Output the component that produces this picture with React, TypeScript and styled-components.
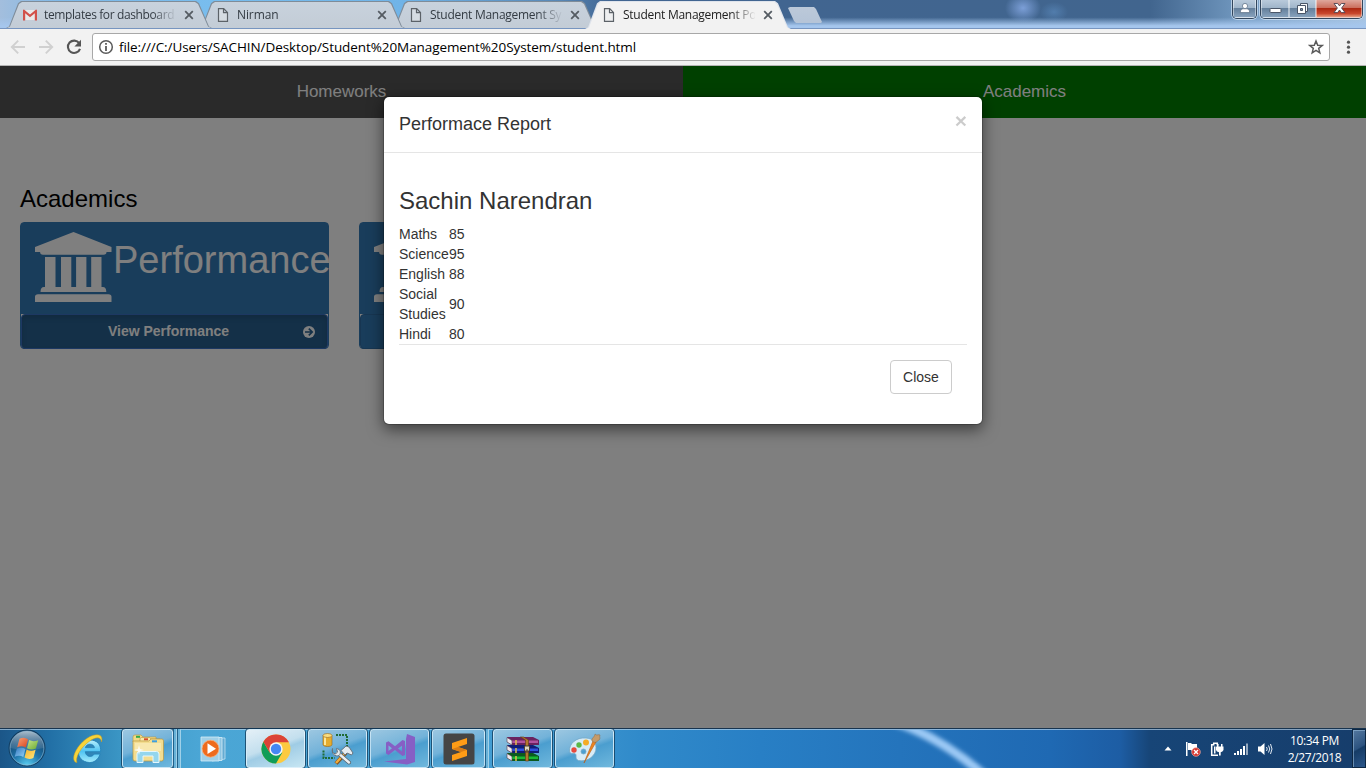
import React from "react";
import styled, { createGlobalStyle, css } from "styled-components";

const GlobalStyle = createGlobalStyle`
  *, *::before, *::after { box-sizing: border-box; }
  body {
    margin: 0;
    width: 1366px;
    height: 768px;
    overflow: hidden;
    font-family: "Liberation Sans", Arial, sans-serif;
    font-size: 14px;
    line-height: 1.42857;
    color: #333;
  }
  svg { display: block; flex: none; }
`;

const Desktop = styled.div`
  display: flex;
  flex-direction: column;
  width: 1366px;
  height: 768px;
  overflow: hidden;
`;

/* ---------- browser frame ---------- */

const TitleBar = styled.header`
  display: flex;
  justify-content: space-between;
  height: 29px;
  padding-left: 6px;
  border-bottom: 1px solid #7795c0;
  background:
    radial-gradient(ellipse 18px 15px at 1023px 8px, rgba(134, 169, 228, 0.85) 0, rgba(134, 169, 228, 0) 100%),
    radial-gradient(ellipse 14px 10px at 1054px 12px, rgba(98, 148, 201, 0.5) 0, rgba(98, 148, 201, 0) 100%),
    linear-gradient(180deg, rgba(165, 198, 237, 0) 62%, #a5c6ed 92%),
    linear-gradient(90deg, #a3bedd 0, #7fb9e8 60px, #78bdee 215px, #70b4e8 400px, #5787b6 560px, #416591 610px, #41658e 1150px, #7198bf 1240px, #a8c4df 1366px);
`;

const TabStrip = styled.div`
  display: flex;
  padding-top: 1px;
`;

const Tab = styled.div<{ $active?: boolean; $order: number }>`
  position: relative;
  z-index: ${(p) => p.$order};
  display: flex;
  align-items: center;
  width: 206px;
  height: ${(p) => (p.$active ? 28 : 27)}px;
  margin-right: -13px;
  padding: ${(p) => (p.$active ? "0 16px 0 17px" : "1px 16px 0 17px")};
  font: 12px/16px "Open Sans", sans-serif;
  color: ${(p) => (p.$active ? "#222" : "#333b43")};
  clip-path: polygon(0 100%, 3px 94%, 12px 8%, 15px 0, 190px 0, 193px 8%, 203px 94%, 206px 100%);
  background: ${(p) => (p.$active ? "#dfe4ec" : "#7f8c99")};

  &::before {
    content: "";
    position: absolute;
    z-index: -1;
    inset: 1px 1px 0 1px;
    clip-path: polygon(0 100%, 3px 94%, 12px 8%, 15px 0, 188px 0, 191px 8%, 201px 94%, 204px 100%);
    background: ${(p) => (p.$active ? "#f2f2f2" : "linear-gradient(#c8d2dd, #c3ccd6)")};
  }
`;

const TabTitle = styled.span<{ $tight: number }>`
  width: 132px;
  margin-left: 7px;
  white-space: nowrap;
  letter-spacing: ${(p) => p.$tight}px;
  mask-image: linear-gradient(90deg, #000 108px, transparent 133px);
`;

const NewTab = styled.div`
  width: 34px;
  height: 16px;
  margin: 6px 0 0 10px;
  clip-path: polygon(2px 0, 26px 0, 28px 2px, 34px 15px, 33px 16px, 8px 16px, 6px 14px, 0 1px);
  background: linear-gradient(#bcc9d9, #b5c4d7);
  filter: drop-shadow(0 0 1px #6d86a5);
`;

const WindowControls = styled.div`
  display: flex;
  height: 19px;
  margin-right: 3px;
`;

const ControlGroup = styled.div`
  display: flex;
  margin-left: 3px;
  border: 1px solid #33465c;
  border-top: 0;
  border-radius: 0 0 5px 5px;
  overflow: hidden;
  box-shadow: 0 0 0 1px rgba(220, 235, 250, 0.65);
`;

const Control = styled.div<{ $width: number; $danger?: boolean }>`
  display: flex;
  align-items: center;
  justify-content: center;
  width: ${(p) => p.$width}px;
  height: 18px;
  padding-bottom: 1px;
  border: 1px solid rgba(255, 255, 255, 0.45);
  border-top: 0;
  background: ${(p) =>
    p.$danger
      ? "linear-gradient(#dfa79c 0, #cb6f5e 45%, #ad2812 50%, #c9472d 80%, #e59b7e 100%)"
      : "linear-gradient(#b9cadb 0, #a0b5ca 45%, #65809c 50%, #86a1bc 100%)"};
`;

const Toolbar = styled.div`
  display: flex;
  align-items: center;
  height: 37px;
  padding: 0 10px 0 10px;
  border-bottom: 1px solid #b4b4b4;
  background: #f2f2f2;
`;

const NavButtons = styled.div`
  display: flex;
  gap: 12px;
  width: 82px;
`;

const Omnibox = styled.div`
  display: flex;
  align-items: center;
  width: 1238px;
  height: 28px;
  padding: 0 5px 0 5px;
  border: 1px solid #a8a8a8;
  border-radius: 3px;
  background: #fff;
`;

const Url = styled.span`
  flex: 1;
  margin-left: 5px;
  font: 13.5px/20px "Open Sans", sans-serif;
  letter-spacing: -0.08px;
  color: #000;
`;

const Menu = styled.div`
  margin-left: 10px;
`;

/* ---------- web page ---------- */

const Viewport = styled.main`
  position: relative;
  height: 662px;
  overflow: hidden;
  background: #fff;
`;

const NavTabs = styled.nav`
  display: grid;
  grid-template-columns: 1fr 1fr;
`;

const NavTab = styled.button<{ $selected?: boolean }>`
  height: 52px;
  border: 0;
  font: 17px/24px "Liberation Sans", Arial, sans-serif;
  color: #fff;
  background: ${(p) => (p.$selected ? "#008000" : "#555")};
`;

const Section = styled.section`
  padding: 68px 20px 0;
`;

const Heading = styled.h3`
  margin: 0 0 10px;
  font-size: 24px;
  font-weight: 400;
  line-height: 26px;
  color: #000;
`;

const Cards = styled.div`
  display: flex;
  gap: 30px;
`;

const Card = styled.article`
  width: 309px;
  height: 127px;
  border: 1px solid #337ab7;
  border-radius: 4px;
  background: linear-gradient(#337ab7 91px, #fff 91px);
  color: #fff;
`;

const CardBody = styled.div`
  display: flex;
  height: 91px;
  padding: 9px 0 0 14px;
  font-size: 38px;
  line-height: 56px;
  white-space: nowrap;
  gap: 1px;
`;

const CardButton = styled.div<{ $focused?: boolean }>`
  display: flex;
  align-items: center;
  height: 35px;
  padding: 0 12px;
  border: 1px solid #2e6da4;
  border-radius: 4px;
  font-weight: 700;
  background: #337ab7;
  ${(p) =>
    p.$focused &&
    css`
      border-color: #3a70c4;
      background: #286090;
      box-shadow: inset 0 3px 5px rgba(0, 0, 0, 0.125);
    `}
  span { flex: 1; text-align: center; }
`;

/* covers the whole page behind the dialog */
const Backdrop = styled.div`
  position: absolute;
  inset: 0;
  padding-top: 30px;
  background: rgba(0, 0, 0, 0.5);
`;

const Dialog = styled.div`
  width: 600px;
  margin: 0 auto;
  border: 1px solid rgba(0, 0, 0, 0.2);
  border-radius: 6px;
  background: #fff;
  background-clip: padding-box;
  box-shadow: 0 5px 15px rgba(0, 0, 0, 0.5);
`;

const DialogHeader = styled.div`
  display: flex;
  justify-content: space-between;
  height: 56px;
  padding: 14px 15px;
  border-bottom: 1px solid #e5e5e5;
`;

const DialogTitle = styled.h4`
  margin: 0;
  font-size: 18px;
  font-weight: 400;
  line-height: 26px;
`;

const Dismiss = styled.button`
  align-self: flex-start;
  margin-top: -1px;
  padding: 0;
  border: 0;
  font: bold 21px/21px "Liberation Sans", Arial, sans-serif;
  color: #000;
  background: none;
  opacity: 0.2;
`;

const DialogBody = styled.div`
  padding: 35px 15px 15px;
`;

const StudentName = styled.h3`
  margin: 0 0 10px;
  font-size: 24px;
  font-weight: 400;
  line-height: 26px;
`;

const Marks = styled.table`
  width: 66px;
  border-collapse: collapse;
  table-layout: fixed;
  line-height: 20px;
  td { padding: 0; vertical-align: middle; }
  td:first-child { width: 50px; }
`;

const DialogFooter = styled.div`
  display: flex;
  justify-content: flex-end;
  padding: 15px;
  border-top: 1px solid #e5e5e5;
`;

const CloseButton = styled.button`
  width: 62px;
  height: 34px;
  padding: 0;
  border: 1px solid #ccc;
  border-radius: 4px;
  font: 14px/20px "Liberation Sans", Arial, sans-serif;
  color: #333;
  background: #fff;
`;

/* ---------- taskbar ---------- */

const Taskbar = styled.footer`
  position: relative;
  display: flex;
  height: 40px;
  border-top: 1px solid #18344f;
  background: linear-gradient(90deg, #1b5688 0, #2270a6 50px, #3e9bc9 130px, #4ba6d5 200px, #48a4d6 400px, #3f98d0 560px, #308aca 640px, #287fc5 760px, #2474bc 900px, #1f69b3 1050px, #1d5da4 1120px, #174577 1150px, #163d6b 1366px);
  box-shadow: inset 0 1px 0 rgba(190, 215, 235, 0.65);
`;

/* wallpaper streak that shows through the glass */
const Streak = styled.svg`
  position: absolute;
  left: 680px;
  top: 1px;
`;

const Launcher = styled.div<{ $width: number }>`
  display: flex;
  align-items: center;
  justify-content: center;
  width: ${(p) => p.$width}px;
  height: 39px;
`;

const TaskButton = styled.div<{ $width: number; $gap?: number; $active?: boolean }>`
  display: flex;
  align-items: center;
  justify-content: center;
  width: ${(p) => p.$width}px;
  height: 39px;
  margin-right: ${(p) => p.$gap ?? 2}px;
  border: 1px solid rgba(225, 243, 252, 0.75);
  border-radius: 3px;
  outline: 1px solid rgba(15, 55, 85, 0.75);
  outline-offset: 0;
  background: ${(p) =>
    p.$active
      ? "linear-gradient(160deg, #e4f0f7 0, #c3dfee 45%, #9fcce5 55%, #c7e6f3 100%)"
      : "linear-gradient(160deg, #9cc7e1 0, #72b2d9 45%, #4b9ecf 55%, #70b8dd 100%)"};
`;

const StackEdge = styled.div<{ $gap?: number }>`
  width: 4px;
  height: 39px;
  margin-right: ${(p) => p.$gap ?? 0}px;
  border-right: 1px solid #9fd0e8;
  border-left: 1px solid #21618a;
  background: #68b2d8;
`;

const Tray = styled.div`
  display: flex;
  align-items: center;
  gap: 8px;
  margin-left: auto;
`;

const Overflow = styled.div`
  margin-right: 5px;
`;

const Clock = styled.div`
  width: 67px;
  margin: 0 -4px 0 0;
  text-align: center;
  font: 12px/17px "Open Sans", sans-serif;
  letter-spacing: -0.35px;
  color: #fff;
`;

const ShowDesktop = styled.div`
  width: 14px;
  height: 39px;
  border: 1px solid #0d2743;
  box-shadow: inset 1px 1px 0 rgba(150, 185, 215, 0.6);
  background: linear-gradient(150deg, #54789f 0, #2c5380 48%, #163c66 52%, #2b568a 100%);
`;

/* ---------- icons ---------- */

const GmailIcon = () => (
  <svg width="14" height="14" viewBox="0 0 14 14">
    <path d="M1 2h12v10H1z" fill="#e9e9e9" />
    <path d="M0 2.2Q0 1.6 1 1.6l6 5 6-5q1 0 1 .8V12.4h-2.2V5.2L7 9.2 2.2 5.2v7.2H0z" fill="#d2514a" />
  </svg>
);

const PageIcon = () => (
  <svg width="14" height="14" viewBox="0 0 14 14">
    <path d="M2.5.7h5.2l3.8 3.8v8.8h-9zM7.5.7v4h4" fill="#e8ebee" fillOpacity=".45" stroke="#5c6268" strokeWidth="1.2" />
  </svg>
);

const TabCloseIcon = () => (
  <svg width="10" height="10" viewBox="0 0 10 10" stroke="#555c63" strokeWidth="1.8">
    <path d="m1.2 1.2 7.6 7.6M8.8 1.2 1.2 8.8" />
  </svg>
);

const ArrowIcon = ({ flip }: { flip?: boolean }) => (
  <svg width="16" height="16" viewBox="0 0 16 16" fill="none" stroke="#d0d0d0" strokeWidth="1.9" transform={flip ? "scale(-1,1)" : undefined}>
    <path d="M15 8H2.5M8.2 1.6 1.8 8l6.4 6.4" />
  </svg>
);

const ReloadIcon = () => (
  <svg width="16" height="16" viewBox="0 0 16 16">
    <path d="M13.2 4.2A6.2 6.2 0 1 0 14 9.8" fill="none" stroke="#555" strokeWidth="2.1" />
    <path d="M15 .8v6.6H8.4z" fill="#555" />
  </svg>
);

const InfoIcon = () => (
  <svg width="16" height="16" viewBox="0 0 16 16">
    <circle cx="8" cy="8" r="6.3" fill="none" stroke="#5a5a5a" strokeWidth="1.5" />
    <path d="M7.1 4.1h1.8v1.7H7.1zM7.1 6.9h1.8v5H7.1z" fill="#5a5a5a" />
  </svg>
);

const StarIcon = () => (
  <svg width="16" height="16" viewBox="0 0 16 16">
    <path d="m8 2 1.7 4.2 4.5.3-3.5 2.9 1.1 4.400L8 11.400l-3.800 2.400 1.100-4.400-3.500-2.900 4.500-.3z" fill="none" stroke="#5a5a5a" strokeWidth="1.500" />
  </svg>
);

const DotsIcon = () => (
  <svg width="16" height="16" viewBox="0 0 16 16" fill="#555">
    <circle cx="8.500" cy="3.200" r="1.600" /><circle cx="8.500" cy="8.200" r="1.600" /><circle cx="8.500" cy="13.200" r="1.600" />
  </svg>
);

const UserGlyph = () => (
  <svg width="12" height="12" viewBox="0 0 12 12" fill="#fff" stroke="#55697f" strokeWidth=".7">
    <path d="M1.300 10.600c0-3 1.600-3.600 3-3.800h3.400c1.400.2 3 .8 3 3.800z" /><circle cx="6" cy="4" r="2.600" />
  </svg>
);

const MinimizeGlyph = () => (
  <svg width="13" height="12" viewBox="0 0 13 12">
    <rect x="1" y="6.500" width="11" height="4" rx=".8" fill="#fff" stroke="#4a5668" />
  </svg>
);

const RestoreGlyph = () => (
  <svg width="13" height="13" viewBox="0 0 13 13" stroke="#4a5668">
    <path d="M4.500 1.500h7v8h-7z" fill="#f5f6f8" /><path d="M1.500 3.500h8v8h-8z" fill="#fff" /><path d="M4.500 6.500h2v2h-2z" fill="#7e96af" />
  </svg>
);

const CloseGlyph = () => (
  <svg width="13" height="12" viewBox="0 0 13 12">
    <path d="M1 1.500h3.600l1.900 2.400 1.900-2.400H12L8.600 6l3.400 4.600H8.400L6.500 8l-1.900 2.600H1L4.400 6z" fill="#fff" stroke="#4d4450" strokeWidth=".9" />
  </svg>
);

const BankIcon = () => (
  <svg width="77" height="70" viewBox="0 0 77 70" fill="#fff">
    <path d="M38.500 0 76.500 15v5h-5q0 2.700-3 2.700H8Q5.100 22.700 5.100 20H0v-5zM10 25h10.500v30H26V25h10.300v30h4.800V25h10.300v30h4.800V25h10.300v30h1.300q3.500 0 3.500 5H5.500q0-5 3.500-5h1zM3 62.300h70.500q3 0 3 2.500V70H0v-5.200q0-2.500 3-2.500z" />
  </svg>
);

const CircleArrow = () => (
  <svg width="12" height="12" viewBox="0 0 12 12">
    <circle cx="6" cy="6" r="6" fill="#fff" />
    <path d="M2 6h7M5.800 2.600 9.200 6l-3.400 3.400" fill="none" stroke="#286090" strokeWidth="1.700" />
  </svg>
);

const StartOrb = () => (
  <svg width="40" height="39" viewBox="0 0 40 39">
    <defs>
      <radialGradient id="orb" cx=".5" cy="1" r=".9">
        <stop offset="0" stopColor="#5cd2f4" /><stop offset=".45" stopColor="#1f74aa" /><stop offset="1" stopColor="#123c62" />
      </radialGradient>
      <linearGradient id="gloss" x2="0" y2="1">
        <stop stopColor="#d2e0e9" stopOpacity=".8" /><stop offset="1" stopColor="#5f87a6" stopOpacity=".3" />
      </linearGradient>
      <linearGradient id="red" x2="1" y2="1"><stop stopColor="#f7a275" /><stop offset="1" stopColor="#dc4420" /></linearGradient>
      <linearGradient id="green" x2="1" y2="1"><stop stopColor="#c6e38a" /><stop offset="1" stopColor="#6aab33" /></linearGradient>
      <linearGradient id="blue" x2="1" y2="1"><stop stopColor="#3478c0" /><stop offset="1" stopColor="#93d2f6" /></linearGradient>
      <linearGradient id="yellow" x2="1" y2="1"><stop stopColor="#f6b22b" /><stop offset="1" stopColor="#fde87f" /></linearGradient>
    </defs>
    <circle cx="20" cy="19" r="18" fill="url(#orb)" stroke="#143e60" />
    <path d="M3 19a17 17 0 0 1 34 0Q20 23 3 19z" fill="url(#gloss)" />
    <circle cx="20" cy="19" r="16.900" fill="none" stroke="#8db9d3" strokeOpacity=".6" />
    <path d="M12.500 9.800q4.500-2.400 8.500.4l-2.200 8.300q-4-2.400-8.600-.2z" fill="url(#red)" />
    <path d="M22.200 11q4 2.200 9 .2l-2.300 8.300q-4.500 2-8.900-.300z" fill="url(#green)" />
    <path d="M9.800 19.700q4.500-2.200 8.600.2l-2.100 8q-4-2.400-8.600-.200z" fill="url(#blue)" />
    <path d="M19.600 20.500q4.400 2.400 9 .200l-2.200 8.200q-4.500 2.200-8.900-.400z" fill="url(#yellow)" />
  </svg>
);

const ExplorerE = () => (
  <svg width="32" height="32" viewBox="0 0 32 32">
    <defs><linearGradient id="ie" x2="0" y2="1"><stop stopColor="#b9f0fd" /><stop offset=".5" stopColor="#4fc3f2" /><stop offset="1" stopColor="#a4ebfc" /></linearGradient></defs>
    <path d="M28.600 18.700H13.300c.3 5.600 7.200 6 8.800 2.400h6.100C26 27 21.900 29.700 17.300 29.500 10 29.100 6 24 6.300 17.800 6.600 11 11.500 7 17.800 7c7.700 0 11.400 5 10.800 11.700zM13.400 14.700h9c-.4-4.600-8.300-4.600-9 0z" fill="url(#ie)" stroke="#227fb5" strokeWidth=".8" />
    <path d="M5 29.600C-3 28 4.500 12 15.500 5 23.500 0 32 .3 29.500 9c-.6-5.600-6-5.200-12.300-.6C8.500 14.500 3 24.600 5 29.600z" fill="#f7d43a" stroke="#c69b24" strokeWidth=".5" />
  </svg>
);

const FolderIcon = () => (
  <svg width="34" height="32" viewBox="0 0 34 32">
    <path d="M2 4q0-2 2-2h6l2 2h13v5H2z" fill="#f2da87" stroke="#b9963c" strokeWidth=".6" />
    <path d="M9 6q0-1.500 1.500-1.500h8L20 6h9v5H9z" fill="#f9e9a8" stroke="#b9963c" strokeWidth=".6" />
    <path d="M5 2.800h4v2H5z" fill="#31a948" /><path d="M13 5.300h4v2h-4z" fill="#d64b2d" />
    <path d="M2 8h16l2-2h11q1.500 0 1.500 2v18q0 2-2 2H4q-2 0-2-2z" fill="#f3dd90" stroke="#b9963c" strokeWidth=".7" />
    <path d="M21 7.300h5v2h-5z" fill="#3e9ee0" /><path d="M4 10h26v8H4z" fill="#f8e8ae" />
    <path d="M6 29.500V21q0-2.500 2.500-2.500h17q2.500 0 2.500 2.500v8.500h-6V23H12v6.500z" fill="#94d6ee" stroke="#e5f7fc" />
    <path d="m8 12 1 4 4 1-4 1-1 4-1-4-4-1 4-1z" fill="#fff" fillOpacity=".8" />
  </svg>
);

const MediaIcon = () => (
  <svg width="30" height="28" viewBox="0 0 30 28">
    <path d="M11 3h15v21l-13 2z" fill="#65abd2" stroke="#c1e2f2" strokeWidth=".8" />
    <path d="M7 2.500h16v23H7z" fill="#8dc5e3" stroke="#d6edf7" strokeWidth=".8" />
    <path d="M2 2h18v24H2z" fill="#9fd0e8" stroke="#d6edf7" strokeWidth=".8" />
    <circle cx="11.500" cy="13.700" r="8.500" fill="#ee6b1d" stroke="#f9b17d" strokeWidth=".8" />
    <path d="m8.500 8.300 8.500 5.400-8.500 5.400z" fill="#fff" />
  </svg>
);

const ChromeIcon = () => (
  <svg width="30" height="30" viewBox="0 0 30 30">
    <circle cx="15" cy="15" r="14.500" fill="#fcca3f" />
    <path d="M2.440 7.750A14.500 14.500 0 0 0 15 29.500L21.300 18.600 8.700 18.600z" fill="#109d58" />
    <path d="M2.440 7.750A14.500 14.500 0 0 1 27.900 8.300H15L8.700 18.600z" fill="#dc4437" />
    <circle cx="15" cy="15" r="6.700" fill="#f3f5f6" /><circle cx="15" cy="15" r="5.200" fill="#4487f3" />
  </svg>
);

const ToolsIcon = () => (
  <svg width="34" height="34" viewBox="0 0 34 34">
    <path d="M2 3.500v9c0 2.700 9 2.700 9 0v-9z" fill="#e5ac2d" stroke="#94651c" strokeWidth=".6" />
    <path d="M4 5v8" stroke="#fce79a" strokeWidth="2" />
    <ellipse cx="6.500" cy="3.500" rx="4.500" ry="2" fill="#f9dd80" stroke="#94651c" strokeWidth=".6" />
    <path d="M15 3h11v11M2.500 18.500V26h11" fill="none" stroke="#1f6b35" strokeWidth="2" strokeDasharray="2 1" />
    <path d="m15 31.500 10-11" stroke="#81501c" strokeWidth="4" /><path d="m15 31 10-11" stroke="#f1ac3c" strokeWidth="2.400" />
    <path d="m20 18.500 5-4.500 3 1 4 6-1.500 2-4.500-2-2 2z" fill="#e4ebf0" stroke="#68747e" />
    <path d="m17 21 11 9.500" stroke="#59636c" strokeWidth="4" strokeLinecap="round" /><path d="m16.500 20.500 11.500 10" stroke="#e9eff2" strokeWidth="2.400" strokeLinecap="round" />
    <path d="M11.500 16.500v4l3 1.500 2-2-1-3.500c4 .5 5 4.500 2.500 7-3.500 1.500-8-1.500-6.500-7z" fill="#e3ebef" stroke="#68747e" />
  </svg>
);

const VisualStudioIcon = () => (
  <svg width="34" height="32" viewBox="0 0 34 32">
    <path fillRule="evenodd" d="M24 1 32 4v25l-8 2.500L1 28.500l22-2.500V6zM3 9.500l2.500-1.200 6.500 5L19.500 7l2.500 1v14l-2.500 1-7.500-6-6.500 5L3 20.500zm2.500 3v5.500L9 15.200zm13.500.200-4 2.700 4 3z" fill="#865fc5" />
  </svg>
);

const SublimeIcon = () => (
  <svg width="32" height="32" viewBox="0 0 32 32">
    <rect x=".5" y=".5" width="31" height="31" rx="2.500" fill="#454545" />
    <path d="m24 5-15 5v6l9 3-9 3v6l15-5v-6l-9-3 9-3z" fill="#ff9c16" />
    <path d="m9 16 9 3 6-2-9-3z" fill="#db7d14" />
  </svg>
);

const RarIcon = () => (
  <svg width="34" height="26" viewBox="0 0 34 26">
    {[
      ["#b0539f", "#6a235f", 1],
      ["#2f4fe0", "#101d77", 9],
      ["#18b935", "#0b5a1e", 17],
    ].map(([light, dark, y]) => (
      <g key={String(y)} transform={`translate(0 ${y})`}>
        <path d="M1 0h26l6 3v5H6L1 5z" fill={String(dark)} />
        <path d="M6 3.500h26v2.500H6z" fill={String(light)} />
        <path d="m1 .500 5 3V8L1 5z" fill="#f0e9ef" stroke="#51424e" strokeWidth=".6" />
        <path d="M10 3v5" stroke="#e0bf4e" strokeWidth="1.500" />
      </g>
    ))}
    <path d="m14.500 1 5 3v21h3V4l-5-3z" fill="#b4782c" stroke="#613b16" strokeWidth=".6" />
    <path d="M18.500 10h5v5h-5z" fill="#ded6c2" stroke="#4e4333" /><path d="M21 13v4" stroke="#4e4333" />
  </svg>
);

const PaintIcon = () => (
  <svg width="34" height="32" viewBox="0 0 34 32">
    <path d="M18 5C8 4 1 11 1.500 18c.3 4 4.500 1.500 6 3s-1 5 3 6.500c9 2 18-5 17.500-13C27.800 8 24 5.500 18 5zm-2.500 11a2.500 2.500 0 1 1 0 5 2.500 2.500 0 0 1 0-5z" fill="#d7ecf7" stroke="#76a8c5" strokeWidth=".8" />
    <circle cx="6" cy="17" r="2.700" fill="#e64a3c" /><circle cx="11" cy="12" r="2.700" fill="#5ab748" /><circle cx="18" cy="9.500" r="3" fill="#f5ac26" />
    <path d="m16 30 9-22 3 1z" fill="#ee851f" stroke="#b65a14" strokeWidth=".6" />
    <path d="M24 8c-1-3 3-4 3-7 2 2 3 0 5 1-1 2 1 4-1 5s-3 4-7 1z" fill="#c59b69" stroke="#8d6945" strokeWidth=".5" />
  </svg>
);

const TrayArrow = () => (
  <svg width="8" height="5" viewBox="0 0 8 5"><path d="m4 .5 3.500 4h-7z" fill="#fff" /></svg>
);

const FlagIcon = () => (
  <svg width="16" height="16" viewBox="0 0 16 16">
    <path d="M1 1h1.500v14H1zM3 2h3l1 1h5v7H7L6 9H3z" fill="#fff" />
    <circle cx="11" cy="11" r="4.300" fill="#d7332b" stroke="#f2b0a8" strokeWidth=".7" />
    <path d="m9 9 4 4m0-4-4 4" stroke="#fff" strokeWidth="1.400" />
  </svg>
);

const BatteryIcon = () => (
  <svg width="16" height="16" viewBox="0 0 16 16">
    <path d="M9 14.200H2.700V3.700h2V2.200h3.600v1.500h1" fill="none" stroke="#fff" strokeWidth="1.500" />
    <path d="M5 5.500h1.500v7H5z" fill="#fff" />
    <path d="M8 3h1.500v2.500H8zM12 3h1.500v2.500H12zM7 5.500h7.500V9q-.8 2-2.800 2.200V14.500H10V11.200Q7.500 11 7 9z" fill="#fff" />
  </svg>
);

const SignalIcon = () => (
  <svg width="16" height="16" viewBox="0 0 16 16" fill="#fff">
    <path d="M1 12h2v2H1zM4 10h2v4H4zM7 8h2v6H7zM10 5h2v9h-2z" /><path d="M13 2.500h2V14h-2z" fillOpacity=".55" />
  </svg>
);

const SpeakerIcon = () => (
  <svg width="16" height="16" viewBox="0 0 16 16">
    <path d="M1 5.500h2.500L7.500 2v12l-4-3.500H1z" fill="#fff" />
    <path d="M9.500 6q1.500 2 0 4M11.500 4.500q2.500 3.500 0 7M13.500 3q3 5 0 10" fill="none" stroke="#e4ecf4" />
  </svg>
);

/* ---------- data ---------- */

const tabs = [
  { title: "templates for dashboard", icon: <GmailIcon />, tight: -0.38 },
  { title: "Nirman", icon: <PageIcon />, tight: -0.1 },
  { title: "Student Management Sy", icon: <PageIcon />, tight: -0.27 },
  { title: "Student Management Po", icon: <PageIcon />, tight: -0.27 },
];

const marks: [string, number][] = [
  ["Maths", 85],
  ["Science", 95],
  ["English", 88],
  ["Social Studies", 90],
  ["Hindi", 80],
];

function BrowserFrame() {
  return (
    <>
      <TitleBar>
        <TabStrip>
          {tabs.map((tab, i) => (
            <Tab key={tab.title} $active={i === 3} $order={i === 3 ? 5 : 4 - i}>
              {tab.icon}
              <TabTitle $tight={tab.tight}>{tab.title}</TabTitle>
              <svg width="8" height="1" />
              <TabCloseIcon />
            </Tab>
          ))}
          <NewTab />
        </TabStrip>
        <WindowControls>
          <ControlGroup><Control $width={23}><UserGlyph /></Control></ControlGroup>
          <ControlGroup>
            <Control $width={28}><MinimizeGlyph /></Control>
            <Control $width={27}><RestoreGlyph /></Control>
            <Control $width={46} $danger><CloseGlyph /></Control>
          </ControlGroup>
        </WindowControls>
      </TitleBar>
      <Toolbar>
        <NavButtons><ArrowIcon /><ArrowIcon flip /><ReloadIcon /></NavButtons>
        <Omnibox>
          <InfoIcon />
          <Url>file:///C:/Users/SACHIN/Desktop/Student%20Management%20System/student.html</Url>
          <StarIcon />
        </Omnibox>
        <Menu><DotsIcon /></Menu>
      </Toolbar>
    </>
  );
}

function PerformanceReport() {
  return (
    <Dialog role="dialog">
      <DialogHeader>
        <DialogTitle>Performace Report</DialogTitle>
        <Dismiss>×</Dismiss>
      </DialogHeader>
      <DialogBody>
        <StudentName>Sachin Narendran</StudentName>
        <Marks>
          <tbody>
            {marks.map(([subject, mark]) => (
              <tr key={subject}><td>{subject}</td><td>{mark}</td></tr>
            ))}
          </tbody>
        </Marks>
        <DialogFooter><CloseButton>Close</CloseButton></DialogFooter>
      </DialogBody>
    </Dialog>
  );
}

function WindowsTaskbar() {
  return (
    <Taskbar>
      <Streak width="460" height="38" viewBox="0 0 460 38">
        <defs><filter id="soft"><feGaussianBlur stdDeviation="2" /></filter></defs>
        <path d="M215-8Q262 8 305 46" fill="none" stroke="#9cc9f5" strokeWidth="9" filter="url(#soft)" />
      </Streak>
      <Launcher $width={54}><StartOrb /></Launcher>
      <Launcher $width={68}><ExplorerE /></Launcher>
      <TaskButton $width={51} $gap={0}><FolderIcon /></TaskButton>
      <StackEdge /><StackEdge />
      <Launcher $width={65}><MediaIcon /></Launcher>
      <TaskButton $width={59} $gap={3} $active><ChromeIcon /></TaskButton>
      <TaskButton $width={59} $gap={3}><ToolsIcon /></TaskButton>
      <TaskButton $width={59} $gap={3}><VisualStudioIcon /></TaskButton>
      <TaskButton $width={53} $gap={0}><SublimeIcon /></TaskButton>
      <StackEdge $gap={4} />
      <TaskButton $width={59} $gap={3}><RarIcon /></TaskButton>
      <TaskButton $width={59}><PaintIcon /></TaskButton>
      <Tray>
        <Overflow><TrayArrow /></Overflow>
        <FlagIcon /><BatteryIcon /><SignalIcon /><SpeakerIcon />
        <Clock><div>10:34 PM</div><div>2/27/2018</div></Clock>
        <ShowDesktop />
      </Tray>
    </Taskbar>
  );
}

export default function App() {
  return (
    <Desktop>
      <GlobalStyle />
      <BrowserFrame />
      <Viewport>
        <NavTabs>
          <NavTab>Homeworks</NavTab>
          <NavTab $selected>Academics</NavTab>
        </NavTabs>
        <Section>
          <Heading>Academics</Heading>
          <Cards>
            <Card>
              <CardBody><BankIcon /><span>Performance</span></CardBody>
              <CardButton $focused><span>View Performance</span><CircleArrow /></CardButton>
            </Card>
            <Card>
              <CardBody><BankIcon /></CardBody>
              <CardButton />
            </Card>
          </Cards>
        </Section>
        <Backdrop><PerformanceReport /></Backdrop>
      </Viewport>
      <WindowsTaskbar />
    </Desktop>
  );
}
